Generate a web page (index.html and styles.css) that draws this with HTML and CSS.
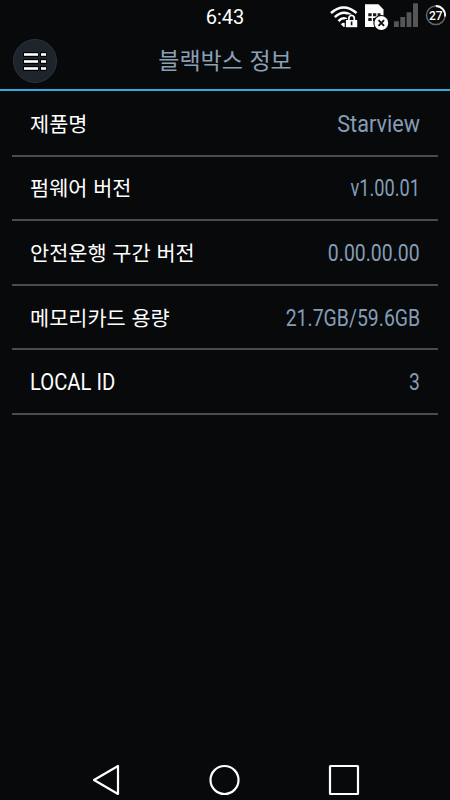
FILE: index.html
```html
<!DOCTYPE html>
<html lang="ko">
<head>
<meta charset="utf-8">
<title>블랙박스 정보</title>
<link rel="stylesheet" href="styles.css">
</head>
<body>
<div class="screen">
  <div class="status">
    <span class="time">6:43</span>
    <svg class="status-icons" width="125" height="34" viewBox="0 0 125 34">
      <g fill="none" stroke="#fff" stroke-width="2.5">
        <path d="M6 13Q18.700 2 31.500 13"/>
        <path d="M9.800 17.200Q18.700 8.800 27.600 16.400"/>
        <path d="M13.500 21.200Q18 16.300 22.500 19.700"/>
      </g>
      <path d="M15.800 24.200Q18.500 21.800 21 23.500V27H18.700Z" fill="#fff"/>
      <path d="M19.700 19H22.300V14.500H31V19H33.500V28.300H19.700Z" fill="#08090b"/>
      <path d="M20.900 20H32.200V27.200H20.900Z" fill="#fff"/>
      <path d="M23.900 20V18.200A2.700 2.700 0 0 1 29.300 18.200V20" fill="none" stroke="#fff" stroke-width="1.700"/>
      <path d="M26.600 21.500V25.300" stroke="#111" stroke-width="1.600"/>
      <path d="M40 4.200H53.500L58.500 9.500V27H40Z" fill="#fff"/>
      <path d="M43.300 13.200H46.700V16.200H43.300ZM48 13.200H51.300V16.200H48ZM52.600 13.200H55.500V16.200H52.600ZM43.300 18H46.700V21H43.300ZM48 18H51V21H48Z" fill="#15181b"/>
      <circle cx="56.300" cy="23" r="8" fill="#08090b"/>
      <circle cx="56.300" cy="23" r="6.900" fill="#fff"/>
      <path d="M53.500 20.200L59.100 25.800M59.100 20.200L53.500 25.800" stroke="#111" stroke-width="1.900"/>
      <path d="M69 21.300H73.800V27H69ZM75.300 17H80.100V27H75.300ZM81.600 12.300H86.400V27H81.600ZM88 3.300H93V27H88Z" fill="#555657"/>
      <circle cx="110.800" cy="15.300" r="9.300" fill="none" stroke="#656667" stroke-width="1.500"/>
      <path d="M110.800 6A9.300 9.300 0 0 1 120.050 16.500" fill="none" stroke="#fff" stroke-width="1.800"/>
      <text class="battery" x="110.800" y="19.500" text-anchor="middle">27</text>
    </svg>
  </div>
  <header class="header">
    <div class="menu">
      <svg width="24" height="20" viewBox="0 0 24 20">
        <g fill="#000">
          <rect width="15.500" height="5" rx="1"/><rect x="17" width="6.500" height="5" rx="1"/>
          <rect y="7" width="15.500" height="5" rx="1"/><rect x="17" y="7" width="6.500" height="5" rx="1"/>
          <rect y="14" width="15.500" height="5" rx="1"/><rect x="17" y="14" width="6.500" height="5" rx="1"/>
        </g>
        <g fill="#fff">
          <rect x="1" y="1.200" width="14" height="2.600"/><rect x="18" y="1.200" width="5" height="2.600"/>
          <rect x="1" y="8.200" width="14" height="2.600"/><rect x="18" y="8.200" width="5" height="2.600"/>
          <rect x="1" y="15.200" width="14" height="2.600"/><rect x="18" y="15.200" width="5" height="2.600"/>
        </g>
      </svg>
    </div>
    <h1 class="title">블랙박스 정보</h1>
  </header>
  <main class="list">
    <div class="row"><span class="label">제품명</span><span class="value name">Starview</span></div>
    <div class="row"><span class="label">펌웨어 버전</span><span class="value firmware">v1.00.01</span></div>
    <div class="row"><span class="label">안전운행 구간 버전</span><span class="value">0.00.00.00</span></div>
    <div class="row"><span class="label">메모리카드 용량</span><span class="value">21.7GB/59.6GB</span></div>
    <div class="row"><span class="label latin">LOCAL ID</span><span class="value">3</span></div>
  </main>
  <nav class="nav">
    <svg width="28" height="32" viewBox="0 0 28 32"><path d="M2 16L26 2V30Z"/></svg>
    <svg width="32" height="32" viewBox="0 0 32 32"><circle cx="16.500" cy="16" r="14"/></svg>
    <svg width="32" height="32" viewBox="0 0 32 32"><rect x="2" y="2" width="28" height="28" rx=".5"/></svg>
  </nav>
</div>
</body>
</html>
```
FILE: styles.css
```css
* { box-sizing: border-box; }
body { margin: 0; background: #08090b; }
.screen {
  width: 450px;
  height: 800px;
  display: flex;
  flex-direction: column;
  background: #08090b;
  color: #fff;
  font-family: Roboto, "Noto Sans CJK KR", sans-serif;
}
.status {
  height: 34px;
  display: grid;
  grid-template-columns: 125px 1fr 125px;
}
.time {
  grid-column: 2;
  text-align: center;
  font-size: 20px;
  line-height: 34px;
}
.battery { font: 500 12px Roboto, sans-serif; fill: #fff; }
.header {
  height: 57px;
  display: grid;
  grid-template-columns: 70px 1fr 70px;
  border-bottom: 2px solid #34abe0;
}
.menu {
  width: 44px;
  height: 44px;
  margin: 5px 0 0 13px;
  padding-top: 2px;
  border: 1px solid #2b333c;
  border-radius: 50%;
  background: #1d242b;
  display: flex;
  align-items: center;
  justify-content: center;
}
.title {
  margin: 0;
  text-align: center;
  font: 400 23px/51px "Noto Sans CJK KR", sans-serif;
  color: #8ba0b5;
}
.list { padding: 1px 12px 0; flex: 1; }
.row {
  height: 64.6px;
  padding: 0 18px;
  display: flex;
  justify-content: space-between;
  align-items: center;
  border-bottom: 2px solid #4a4b4c;
}
.label {
  font: 400 20.8px/30px "Noto Sans CJK KR", sans-serif;
  padding-bottom: 1px;
}
.label.latin {
  font: 400 23px/30px Roboto, sans-serif;
  padding: 3px 0 0;
  transform: scaleX(.88);
  transform-origin: left;
}
.value {
  padding-top: 3px;
  font-size: 23px;
  line-height: 30px;
  color: #849db6;
  transform: scaleX(.845);
  transform-origin: right;
}
.value.name { transform: scaleX(.94); }
.value.firmware { transform: scaleX(.79); }
.nav {
  height: 36.5px;
  padding: 0 90px 0 92px;
  display: flex;
  justify-content: space-between;
}
.nav svg { fill: none; stroke: #fff; stroke-width: 2.2; stroke-linejoin: round; }
```
